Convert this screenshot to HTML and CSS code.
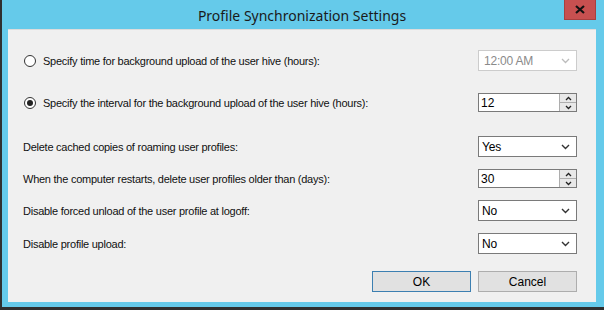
FILE: index.html
```html
<!DOCTYPE html>
<html lang="en">
<head>
    <meta charset="UTF-8">
    <title>Profile Synchronization Settings</title>
    <link rel="stylesheet" href="styles.css">
</head>
<body>
    <div class="window">
        <div class="titlebar">
            <span></span>
            <div class="title">Profile Synchronization Settings</div>
            <button class="close-btn">
                <svg width="10" height="9" viewBox="0 0 10 9"><path d="M1 1 L9 8 M9 1 L1 8" stroke="#111" stroke-width="2.2"/></svg>
            </button>
        </div>

        <div class="content">
            <div class="row row-1">
                <label class="radio-label"><span class="radio"></span>Specify time for background upload of the user hive (hours):</label>
                <div class="combo disabled">
                    <span>12:00 AM</span>
                    <svg width="9" height="6" viewBox="0 0 9 6"><path d="M1 1 L4.5 4.5 L8 1" fill="none" stroke="#bcbcbc" stroke-width="1.3"/></svg>
                </div>
            </div>
            <div class="row row-2">
                <label class="radio-label"><span class="radio checked"></span>Specify the interval for the background upload of the user hive (hours):</label>
                <div class="spin">
                    <span class="spin-value">12</span>
                    <div class="spin-btns">
                        <span class="spin-btn"><svg width="7" height="5" viewBox="0 0 7 5"><path d="M1 4 L3.5 1.5 L6 4" fill="none" stroke="#222" stroke-width="1.3"/></svg></span>
                        <span class="spin-btn"><svg width="7" height="5" viewBox="0 0 7 5"><path d="M1 1 L3.5 3.5 L6 1" fill="none" stroke="#222" stroke-width="1.3"/></svg></span>
                    </div>
                </div>
            </div>
            <div class="row row-3">
                <label>Delete cached copies of roaming user profiles:</label>
                <div class="combo">
                    <span>Yes</span>
                    <svg width="9" height="6" viewBox="0 0 9 6"><path d="M1 1 L4.5 4.5 L8 1" fill="none" stroke="#333" stroke-width="1.4"/></svg>
                </div>
            </div>
            <div class="row row-4">
                <label>When the computer restarts, delete user profiles older than (days):</label>
                <div class="spin">
                    <span class="spin-value">30</span>
                    <div class="spin-btns">
                        <span class="spin-btn"><svg width="7" height="5" viewBox="0 0 7 5"><path d="M1 4 L3.5 1.5 L6 4" fill="none" stroke="#222" stroke-width="1.3"/></svg></span>
                        <span class="spin-btn"><svg width="7" height="5" viewBox="0 0 7 5"><path d="M1 1 L3.5 3.5 L6 1" fill="none" stroke="#222" stroke-width="1.3"/></svg></span>
                    </div>
                </div>
            </div>
            <div class="row row-5">
                <label>Disable forced unload of the user profile at logoff:</label>
                <div class="combo">
                    <span>No</span>
                    <svg width="9" height="6" viewBox="0 0 9 6"><path d="M1 1 L4.5 4.5 L8 1" fill="none" stroke="#333" stroke-width="1.4"/></svg>
                </div>
            </div>
            <div class="row row-6">
                <label>Disable profile upload:</label>
                <div class="combo">
                    <span>No</span>
                    <svg width="9" height="6" viewBox="0 0 9 6"><path d="M1 1 L4.5 4.5 L8 1" fill="none" stroke="#333" stroke-width="1.4"/></svg>
                </div>
            </div>
            <div class="buttons">
                <button class="btn default">OK</button>
                <button class="btn">Cancel</button>
            </div>
        </div>
    </div>
</body>
</html>
```

FILE: styles.css
```css
* {
    margin: 0;
    padding: 0;
    box-sizing: border-box;
}

body {
    background-color: #2b2b2b;
    font-family: 'Liberation Sans', Arial, sans-serif;
    font-size: 11px;
    color: #000;
}

.window {
    width: 604px;
    height: 310px;
    background-color: #65caea;
    border-left: 2px solid #2f2f2f;
    border-bottom: 3px solid #2f2f2f;
    display: flex;
    flex-direction: column;
}

.titlebar {
    height: 29px;
    display: grid;
    grid-template-columns: 1fr auto 1fr;
    padding-left: 6px;
    padding-right: 8px;
}

.titlebar .title {
    font-family: 'Noto Sans', sans-serif;
    font-size: 14px;
    color: #1a1a1a;
    align-self: center;
    padding-top: 1px;
}

.close-btn {
    justify-self: end;
    width: 32px;
    height: 20px;
    background-color: #c75050;
    border: 1px solid #a8403f;
    border-top: none;
    display: flex;
    align-items: center;
    justify-content: center;
}

.content {
    flex: 1;
    margin: 0 8px 5px 6px;
    background-color: #f0f0f0;
    border-top: 1px solid #dcdcdc;
    padding: 20px 19px 0 15px;
    display: flex;
    flex-direction: column;
}

.row {
    display: flex;
    align-items: center;
    justify-content: space-between;
    height: 21px;
}

.row label {
    letter-spacing: -0.25px;
    color: #111;
}

.row-2 { margin-top: 21px; }
.row-3 { margin-top: 23px; }
.row-4 { margin-top: 11px; }
.row-5 { margin-top: 11px; }
.row-6 { margin-top: 12px; }

.radio-label {
    display: flex;
    align-items: center;
    gap: 7px;
    padding-left: 1px;
}

.radio {
    width: 12px;
    height: 12px;
    border: 1px solid #333;
    border-radius: 50%;
    background-color: #fff;
    display: flex;
    align-items: center;
    justify-content: center;
}

.radio.checked::after {
    content: '';
    width: 6px;
    height: 6px;
    border-radius: 50%;
    background-color: #222;
}

.combo {
    width: 99px;
    height: 21px;
    border: 1px solid #7a7a7a;
    background-color: #fff;
    display: flex;
    align-items: center;
    justify-content: space-between;
    padding: 0 6px 0 3px;
    font-size: 12px;
    letter-spacing: -0.2px;
}

.combo.disabled {
    border-color: #cccccc;
    color: #8a8a8a;
    padding-left: 5px;
}

.spin {
    width: 99px;
    height: 19px;
    border: 1px solid #7a7a7a;
    background-color: #fff;
    display: flex;
    align-items: center;
    font-size: 12px;
}

.spin-value {
    flex: 1;
    padding-left: 2px;
}

.spin-btns {
    width: 17px;
    height: 100%;
    display: flex;
    flex-direction: column;
    border-left: 1px solid #adadad;
}

.spin-btn {
    flex: 1;
    background-color: #e8e8e8;
    display: flex;
    align-items: center;
    justify-content: center;
}

.spin-btn + .spin-btn {
    border-top: 1px solid #adadad;
}

.buttons {
    display: flex;
    justify-content: flex-end;
    gap: 7px;
    margin-top: 17px;
}

.btn {
    width: 99px;
    height: 21px;
    background-color: #e1e1e1;
    border: 1px solid #adadad;
    font-family: 'Liberation Sans', Arial, sans-serif;
    font-size: 12px;
    color: #000;
}

.btn.default {
    border-color: #3c7fb1;
}
```
